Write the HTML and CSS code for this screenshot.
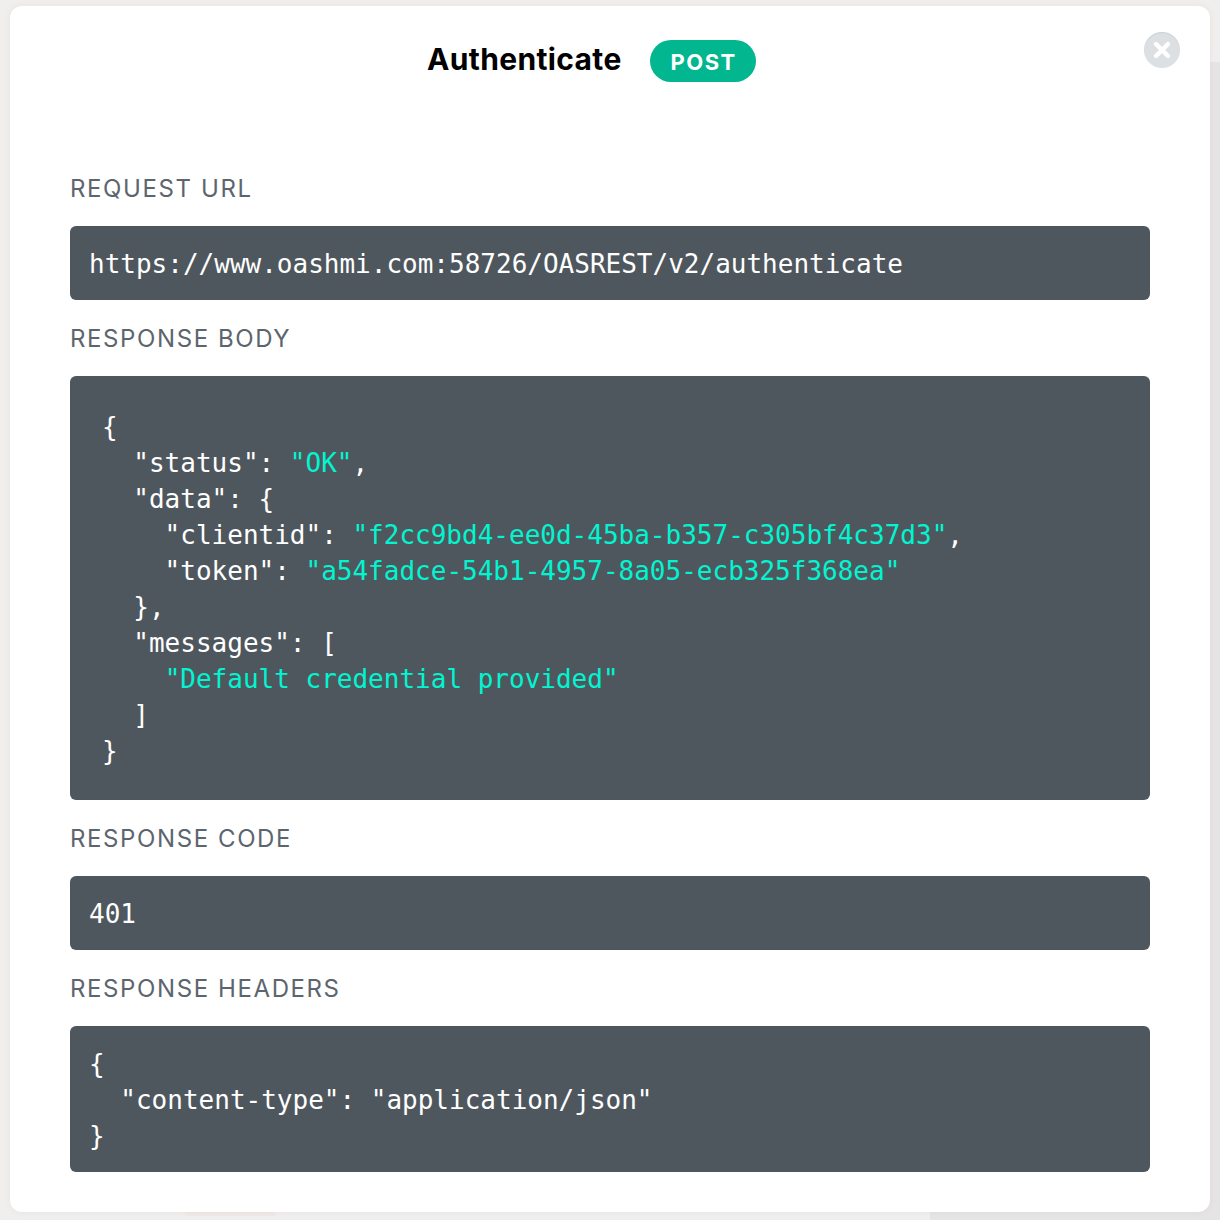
FILE: index.html
```html
<!DOCTYPE html>
<html lang="en">
<head>
<meta charset="utf-8">
<title>Authenticate</title>
<link rel="stylesheet" href="styles.css">
</head>
<body>
<section class="modal">
  <header class="modal-head">
    <h1 class="title">Authenticate</h1>
    <span class="badge">POST</span>
    <button class="close" aria-label="Close">
      <svg viewBox="0 0 36 36" width="36" height="36"><path d="M12 12 L24 24 M24 12 L12 24" stroke="#fff" stroke-width="4.4" stroke-linecap="round" fill="none"/></svg>
    </button>
  </header>
  <h2 class="label">REQUEST URL</h2>
  <pre class="code">https://www.oashmi.com:58726/OASREST/v2/authenticate</pre>
  <h2 class="label">RESPONSE BODY</h2>
  <pre class="code"><code class="inner">{
  "status": <span class="str">"OK"</span>,
  "data": {
    "clientid": <span class="str">"f2cc9bd4-ee0d-45ba-b357-c305bf4c37d3"</span>,
    "token": <span class="str">"a54fadce-54b1-4957-8a05-ecb325f368ea"</span>
  },
  "messages": [
    <span class="str">"Default credential provided"</span>
  ]
}</code></pre>
  <h2 class="label">RESPONSE CODE</h2>
  <pre class="code">401</pre>
  <h2 class="label">RESPONSE HEADERS</h2>
  <pre class="code">{
  "content-type": "application/json"
}</pre>
</section>
</body>
</html>
```
FILE: styles.css
```css
html, body { margin: 0; padding: 0; }
body {
  width: 1220px;
  height: 1220px;
  overflow: hidden;
  background-color: #f0efed;
  background-image:
    linear-gradient(#e6e4e4, #e6e4e4),
    linear-gradient(#f1e9e7, #f1e9e7);
  background-repeat: no-repeat;
  background-size: 290px 1158px, 90px 5px;
  background-position: 930px 62px, 185px 1211px;
  box-sizing: border-box;
  padding: 6px 10px 0;
  font-family: Inter, "Liberation Sans", sans-serif;
}
.modal {
  width: 1200px;
  height: 1206px;
  box-sizing: border-box;
  background: #fff;
  border-radius: 12px;
  padding: 0 60px;
  box-shadow: 0 0 8px rgba(0,0,0,.05);
}
.modal-head {
  position: relative;
  height: 144px;
  box-sizing: border-box;
  padding: 33px 0 0 357px;
  display: flex;
  align-items: flex-start;
}
.title {
  margin: 0;
  font-size: 30px;
  line-height: 40px;
  font-weight: 700;
  color: #000;
  letter-spacing: 0.35px;
}
.badge {
  margin: 1px 0 0 28px;
  height: 42px;
  width: 106px;
  box-sizing: border-box;
  padding: 2px 0 0 2px;
  border-radius: 21px;
  background: #02b68f;
  color: #fff;
  font-size: 22px;
  font-weight: 700;
  letter-spacing: 1.5px;
  display: flex;
  align-items: center;
  justify-content: center;
}
.close {
  position: absolute;
  top: 26px;
  right: -30px;
  width: 36px;
  height: 36px;
  padding: 0;
  border: 0;
  border-radius: 50%;
  background: #dde0e3;
  box-shadow: inset 0 1px 1px rgba(0,0,0,.08);
}
.close svg { display: block; }
.label {
  margin: 0;
  height: 76px;
  display: flex;
  align-items: center;
  font-size: 24px;
  font-weight: 400;
  letter-spacing: 1.6px;
  color: #5c656e;
}
.code {
  margin: 0;
  padding: 20px 19px 18px;
  background: #4f575e;
  border-radius: 6px;
  color: #fff;
  font-family: "DejaVu Sans Mono", monospace;
  font-size: 26px;
  line-height: 36px;
}
.inner {
  display: block;
  padding: 13px 13px;
  font: inherit;
}
.str { color: #00f5d0; }
```
